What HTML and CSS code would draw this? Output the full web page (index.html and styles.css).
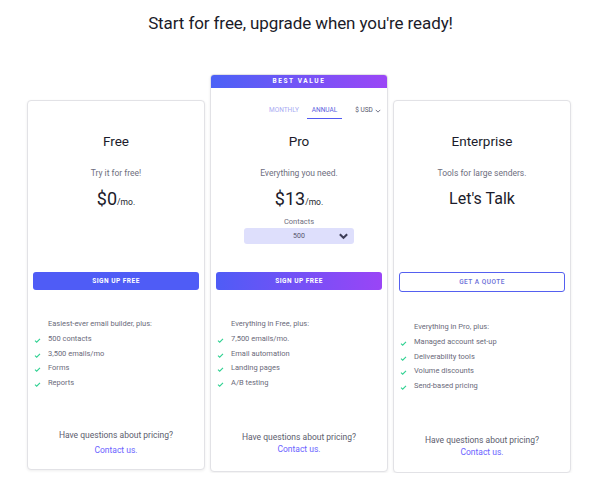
FILE: index.html
```html
<!DOCTYPE html>
<html lang="en">
<head>
<meta charset="utf-8">
<title>Pricing</title>
<link rel="stylesheet" href="styles.css">
</head>
<body>
<main class="page">
  <h1 class="headline">Start for free, upgrade when you're ready!</h1>
  <div class="plans">
    <section class="card card-free">
      <div class="card-top">
        <h2 class="plan-name">Free</h2>
        <p class="plan-desc">Try it for free!</p>
        <p class="price"><span class="amount">$0</span><span class="per">/mo.</span></p>
      </div>
      <a class="btn btn-solid">SIGN UP FREE</a>
      <ul class="features">
        <li class="intro">Easiest-ever email builder, plus:</li>
        <li><svg class="chk" viewBox="0 0 8 6"><path d="M1 3.2 L3 5 L7 1"/></svg>500 contacts</li>
        <li><svg class="chk" viewBox="0 0 8 6"><path d="M1 3.2 L3 5 L7 1"/></svg>3,500 emails/mo</li>
        <li><svg class="chk" viewBox="0 0 8 6"><path d="M1 3.2 L3 5 L7 1"/></svg>Forms</li>
        <li><svg class="chk" viewBox="0 0 8 6"><path d="M1 3.2 L3 5 L7 1"/></svg>Reports</li>
      </ul>
      <div class="card-foot">
        <p>Have questions about pricing?</p>
        <a class="contact">Contact us.</a>
      </div>
    </section>

    <section class="card card-pro">
      <div class="badge">BEST VALUE</div>
      <div class="card-top card-top-pro">
        <div class="tabs">
          <span class="tab">MONTHLY</span>
          <span class="tab tab-active">ANNUAL</span>
          <span class="currency">$ USD <svg class="cur-chev" viewBox="0 0 8 5"><path d="M1 1 L4 4 L7 1"/></svg></span>
        </div>
        <h2 class="plan-name">Pro</h2>
        <p class="plan-desc">Everything you need.</p>
        <p class="price"><span class="amount">$13</span><span class="per">/mo.</span></p>
        <p class="contacts-label">Contacts</p>
        <div class="select"><span>500</span><svg class="sel-chev" viewBox="0 0 12 8"><path d="M2 2 L6 6 L10 2"/></svg></div>
      </div>
      <a class="btn btn-grad">SIGN UP FREE</a>
      <ul class="features">
        <li class="intro">Everything in Free, plus:</li>
        <li><svg class="chk" viewBox="0 0 8 6"><path d="M1 3.2 L3 5 L7 1"/></svg>7,500 emails/mo.</li>
        <li><svg class="chk" viewBox="0 0 8 6"><path d="M1 3.2 L3 5 L7 1"/></svg>Email automation</li>
        <li><svg class="chk" viewBox="0 0 8 6"><path d="M1 3.2 L3 5 L7 1"/></svg>Landing pages</li>
        <li><svg class="chk" viewBox="0 0 8 6"><path d="M1 3.2 L3 5 L7 1"/></svg>A/B testing</li>
      </ul>
      <div class="card-foot">
        <p>Have questions about pricing?</p>
        <a class="contact">Contact us.</a>
      </div>
    </section>

    <section class="card card-ent">
      <div class="card-top">
        <h2 class="plan-name">Enterprise</h2>
        <p class="plan-desc">Tools for large senders.</p>
        <p class="price"><span class="talk">Let's Talk</span></p>
      </div>
      <a class="btn btn-outline">GET A QUOTE</a>
      <ul class="features">
        <li class="intro">Everything in Pro, plus:</li>
        <li><svg class="chk" viewBox="0 0 8 6"><path d="M1 3.2 L3 5 L7 1"/></svg>Managed account set-up</li>
        <li><svg class="chk" viewBox="0 0 8 6"><path d="M1 3.2 L3 5 L7 1"/></svg>Deliverability tools</li>
        <li><svg class="chk" viewBox="0 0 8 6"><path d="M1 3.2 L3 5 L7 1"/></svg>Volume discounts</li>
        <li><svg class="chk" viewBox="0 0 8 6"><path d="M1 3.2 L3 5 L7 1"/></svg>Send-based pricing</li>
      </ul>
      <div class="card-foot">
        <p>Have questions about pricing?</p>
        <a class="contact">Contact us.</a>
      </div>
    </section>
  </div>
</main>
</body>
</html>
```

FILE: styles.css
```css
* { box-sizing: border-box; }
html, body { margin: 0; padding: 0; background: #fff; }
body { font-family: Roboto, "Liberation Sans", Arial, sans-serif; color: #1e1e2d; }
p, h1, h2, ul { margin: 0; padding: 0; }

.page { width: 593px; padding-top: 12px; }

.headline {
  font-size: 17px;
  font-weight: 400;
  line-height: 22px;
  text-align: center;
  padding-left: 8px;
  color: #1b1b29;
  letter-spacing: -0.1px;
}

.plans {
  display: flex;
  justify-content: center;
  align-items: flex-start;
  gap: 5px;
  margin-top: 40px;
  padding-left: 5px;
}

.card {
  width: 178px;
  border: 1px solid #e2e2e6;
  border-radius: 4px;
  box-shadow: 0 1px 3px rgba(0,0,0,0.07);
  display: flex;
  flex-direction: column;
  background: #fff;
}
.card-free { height: 370px; margin-top: 26px; }
.card-pro { height: 398px; overflow: hidden; }
.card-ent { height: 373px; margin-top: 26px; }

.badge {
  height: 14px;
  background: linear-gradient(90deg, #4b62f6, #9b46f6);
  color: #fff;
  font-size: 6.5px;
  font-weight: 700;
  letter-spacing: 1.6px;
  text-align: center;
  line-height: 14px;
  margin: -1px -1px 0;
}

.card-top {
  height: 171px;
  padding-top: 31px;
  text-align: center;
}
.card-top-pro { height: 184px; padding-top: 14px; }

.tabs {
  display: flex;
  align-items: center;
  height: 17px;
  padding-left: 54px;
  font-size: 6.5px;
  margin-bottom: 13px;
}
.tab {
  color: #a9abf2;
  padding: 0 4px;
  height: 17px;
  line-height: 16px;
  margin-right: 4px;
}
.tab-active {
  color: #5a5fe0;
  border-bottom: 1.5px solid #5159f0;
  padding: 0 5px;
}
.currency {
  margin-left: 9px;
  color: #55556a;
  font-size: 6.5px;
  line-height: 15px;
  display: flex;
  align-items: center;
  gap: 2px;
}
.cur-chev { width: 6px; height: 4px; fill: none; stroke: #66667a; stroke-width: 1.2; }

.plan-name {
  font-size: 13.5px;
  font-weight: 400;
  line-height: 18px;
  color: #1c1c2b;
}
.plan-desc {
  margin-top: 17px;
  font-size: 8.5px;
  line-height: 12px;
  color: #6e6e7e;
}
.price {
  margin-top: 9px;
  line-height: 22px;
  color: #1c1c2b;
}
.amount { font-size: 18px; }
.per { font-size: 8.5px; }
.talk { font-size: 16px; }

.contacts-label {
  margin-top: 4px;
  font-size: 7.5px;
  line-height: 10px;
  color: #6e6e7e;
}
.select {
  margin: 1px auto 0;
  width: 110px;
  height: 16px;
  border-radius: 3px;
  background: #dedffc;
  display: flex;
  align-items: center;
  justify-content: center;
  position: relative;
  font-size: 7px;
  color: #55556a;
}
.sel-chev {
  position: absolute;
  right: 5px;
  top: 4px;
  width: 11px;
  height: 8px;
  fill: none;
  stroke: #3e3e58;
  stroke-width: 2.2;
}

.btn {
  display: block;
  margin: 0 5px;
  height: 18px;
  border-radius: 3px;
  font-size: 6.5px;
  font-weight: 700;
  letter-spacing: 0.5px;
  text-align: center;
  line-height: 18px;
  color: #fff;
}
.btn-solid { background: #4f5cf6; }
.btn-grad { background: linear-gradient(90deg, #4f5cf6, #9a45f6); }
.btn-outline {
  height: 20px;
  line-height: 18px;
  border: 1px solid #5560f0;
  color: #6a6ed8;
  font-weight: 500;
}

.features {
  list-style: none;
  margin-top: 28px;
  padding-left: 20px;
  font-size: 7.5px;
  color: #6a6a7a;
}
.card-ent .features { margin-top: 29px; }
.features li {
  position: relative;
  line-height: 12px;
  height: 14.6px;
}
.features li.intro { height: 15px; }
.chk {
  position: absolute;
  left: -14px;
  top: 5px;
  width: 7px;
  height: 5px;
  fill: none;
  stroke: #2ed191;
  stroke-width: 1.3;
}

.card-foot {
  margin-top: auto;
  padding-bottom: 11px;
  text-align: center;
  font-size: 8.5px;
  line-height: 15px;
  color: #5d5d6e;
}
.card-pro .card-foot { line-height: 12px; padding-bottom: 16px; }
.card-ent .card-foot { line-height: 12px; padding-bottom: 14px; }
.contact { color: #6b63ff; }
```
